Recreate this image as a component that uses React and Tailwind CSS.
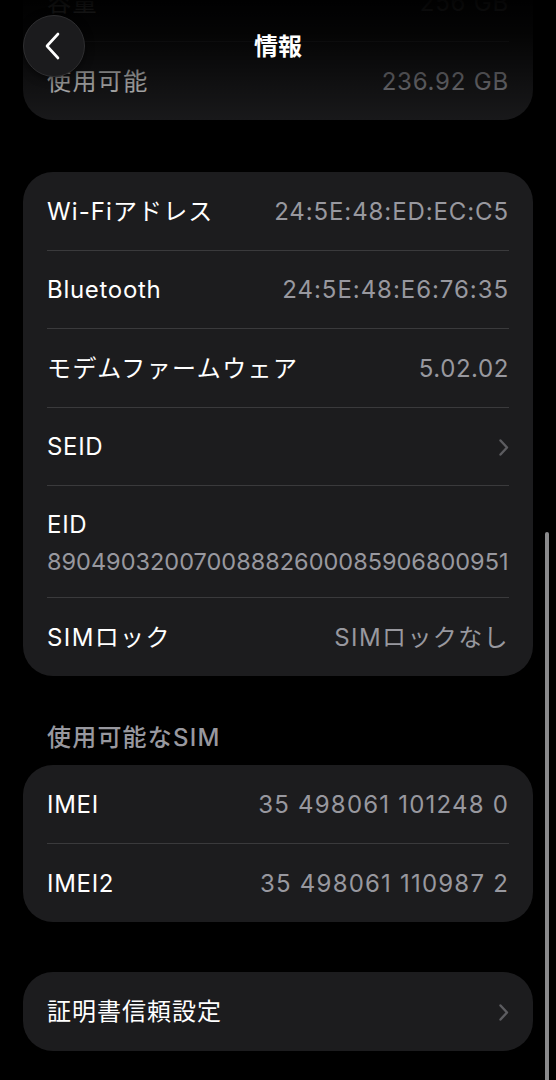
import React from "react";

const font = { fontFamily: 'Inter, "Noto Sans CJK JP", sans-serif' };

function Chevron() {
  return (
    <svg width="10" height="17" viewBox="0 0 10 17" fill="none">
      <path d="M1.5 1.5 L8 8.5 L1.5 15.5" stroke="#5c5c60" strokeWidth="2.4" strokeLinecap="round" strokeLinejoin="round" />
    </svg>
  );
}

function Row({ label, value, chevron, last, lt = "tracking-[0.7px]", vt = "tracking-[0.8px]" }) {
  return (
    <div className={`flex items-center justify-between h-[78.5px] pt-[2px] ${last ? "" : "border-b border-[#3a3a3c]"}`}>
      <span className={`text-[24px] text-white leading-none ${lt}`}>{label}</span>
      {value && <span className={`text-[24px] text-[#98989f] leading-none ${vt}`}>{value}</span>}
      {chevron && <Chevron />}
    </div>
  );
}

function Card({ children, className = "" }) {
  return <div className={`bg-[#1c1c1e] rounded-[30px] px-[24px] ${className}`}>{children}</div>;
}

export default function App() {
  return (
    <div className="relative w-[556px] h-[1080px] bg-black overflow-hidden" style={font}>
      <div className="px-[23px]">
        <Card className="-mt-[37px]">
          <Row label="容量" value="256 GB" lt="tracking-[1.4px]" />
          <Row label="使用可能" value="236.92 GB" lt="tracking-[1.4px]" last />
        </Card>

        <Card className="mt-[52px]">
          <Row label="Wi-Fiアドレス" value="24:5E:48:ED:EC:C5" lt="tracking-[1.1px]" vt="tracking-[0.9px]" />
          <Row label="Bluetooth" value="24:5E:48:E6:76:35" vt="tracking-[0.95px]" />
          <Row label="モデムファームウェア" value="5.02.02" lt="tracking-[1.4px]" vt="tracking-[0.6px]" />
          <Row label="SEID" chevron />
          <div className="flex flex-col justify-center h-[111.5px] border-b border-[#3a3a3c] gap-[13px] pt-[3px]">
            <span className="text-[24px] text-white leading-none tracking-[0.7px]">EID</span>
            <span className="text-[23.5px] text-[#98989f] leading-none">89049032007008882600085906800951</span>
          </div>
          <Row label="SIMロック" value="SIMロックなし" lt="tracking-[1.4px]" vt="tracking-[1.4px]" last />
        </Card>

        <div className="mt-[50px] px-[24px] text-[24px] font-medium text-[#98989f] leading-none h-[24px] tracking-[1.2px]">使用可能なSIM</div>

        <Card className="mt-[15px]">
          <Row label="IMEI" value="35 498061 101248 0" vt="tracking-[1.2px]" />
          <Row label="IMEI2" value="35 498061 110987 2" vt="tracking-[1.2px]" last />
        </Card>

        <Card className="mt-[50px]">
          <Row label="証明書信頼設定" chevron lt="tracking-[1px]" last />
        </Card>
      </div>

      <div className="absolute top-0 left-0 right-0 h-[135px] bg-[linear-gradient(to_bottom,rgba(0,0,0,0.97)_0%,rgba(0,0,0,0.85)_25%,rgba(0,0,0,0.45)_60%,rgba(0,0,0,0)_100%)] pointer-events-none" />

      <div className="absolute top-0 left-0 right-0 h-[94px] flex items-center justify-center">
        <div className="absolute left-[23px] top-[15px] w-[62px] h-[62px] rounded-full bg-[#1b1b1d] border border-[#2e2e30] flex items-center justify-center shadow-[0_2px_8px_rgba(0,0,0,0.5)]">
          <svg width="20" height="30" viewBox="0 0 20 30" fill="none" className="-ml-[3px]">
            <path d="M15 3 L4 15 L15 27" stroke="white" strokeWidth="2.6" strokeLinecap="round" strokeLinejoin="round" />
          </svg>
        </div>
        <span className="text-[24px] font-semibold text-white">情報</span>
      </div>

      <div className="absolute left-[545px] top-[532px] w-[4px] h-[560px] rounded-full bg-[#8a8a8c]" />
    </div>
  );
}
